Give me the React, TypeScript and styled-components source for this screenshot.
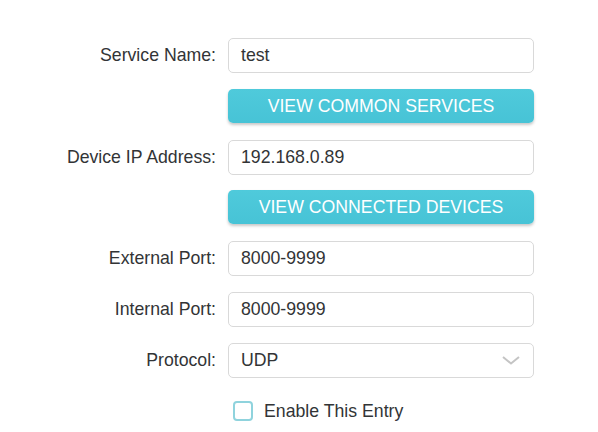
import styled, { createGlobalStyle } from 'styled-components';

const GlobalStyle = createGlobalStyle`
  html, body {
    margin: 0;
    padding: 0;
    background: #ffffff;
  }
  body {
    font-family: "Liberation Sans", Arial, sans-serif;
    color: #333333;
  }
`;

const Form = styled.div`
  display: flex;
  flex-direction: column;
  gap: 15.8px;
  padding-top: 38px;
`;

const Row = styled.div`
  display: grid;
  grid-template-columns: 216px 306px;
  column-gap: 12px;
  align-items: center;
  height: 35px;
`;

const Label = styled.div`
  text-align: right;
  font-size: 17.7px;
  color: #323436;
  white-space: nowrap;
`;

const Field = styled.div`
  position: relative;
  box-sizing: border-box;
  height: 35px;
  border: 1px solid #d9d9d9;
  border-radius: 5px;
  padding: 0 12px;
  display: flex;
  align-items: center;
  font-size: 17.7px;
  color: #323436;
`;

const Chevron = styled.svg`
  position: absolute;
  right: 13px;
  top: 50%;
  margin-top: -4px;
`;

const Button = styled.button`
  box-sizing: border-box;
  height: 34px;
  padding-top: 2px;
  border: none;
  border-radius: 5px;
  background: linear-gradient(#4fcadb, #47c3d6);
  box-shadow: 0 2px 3px rgba(0, 0, 0, 0.22);
  color: #ffffff;
  font-family: "Liberation Sans", Arial, sans-serif;
  font-size: 17.7px;
  text-transform: uppercase;
  cursor: pointer;
  align-self: start;
`;

const CheckWrap = styled.label`
  display: flex;
  align-items: center;
  gap: 11px;
  padding-left: 5px;
  font-size: 17.7px;
  color: #323436;
`;

const Box = styled.span`
  box-sizing: border-box;
  width: 20px;
  height: 20px;
  border: 2px solid #8fd3dd;
  border-radius: 4px;
  background: #ffffff;
`;

const App = () => {
  return (
    <>
      <GlobalStyle />
      <Form>
        <Row>
          <Label>Service Name:</Label>
          <Field>test</Field>
        </Row>
        <Row>
          <span />
          <Button>View Common Services</Button>
        </Row>
        <Row>
          <Label>Device IP Address:</Label>
          <Field>192.168.0.89</Field>
        </Row>
        <Row>
          <span />
          <Button>View Connected Devices</Button>
        </Row>
        <Row>
          <Label>External Port:</Label>
          <Field>8000-9999</Field>
        </Row>
        <Row>
          <Label>Internal Port:</Label>
          <Field>8000-9999</Field>
        </Row>
        <Row>
          <Label>Protocol:</Label>
          <Field>
            UDP
            <Chevron width='18' height='9' viewBox='0 0 18 9'>
              <path d='M1 1 L9 7.5 L17 1' fill='none' stroke='#c4c4c4' strokeWidth='2' />
            </Chevron>
          </Field>
        </Row>
        <Row>
          <span />
          <CheckWrap>
            <Box />
            Enable This Entry
          </CheckWrap>
        </Row>
      </Form>
    </>
  );
};

export default App;
